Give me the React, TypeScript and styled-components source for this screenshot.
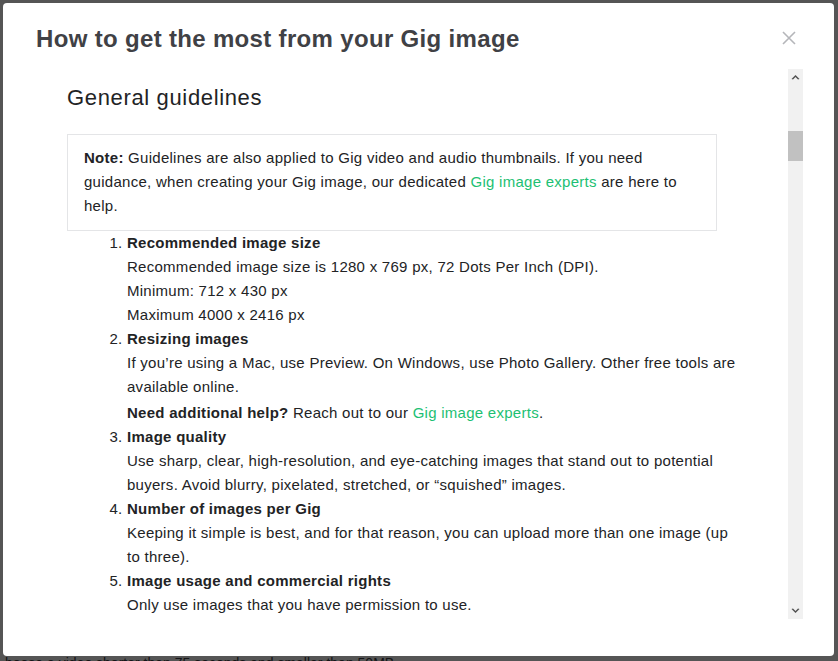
import React from "react";
import styled, { createGlobalStyle } from "styled-components";

const GlobalStyle = createGlobalStyle`
  html, body { margin: 0; padding: 0; }
  body {
    font-family: "Liberation Sans", Arial, sans-serif;
    background: #ffffff;
    overflow: hidden;
  }
  * { box-sizing: border-box; }
`;

const BackPage = styled.div`
  height: 661px;
  padding: 653px 0 0 5px;
  font-size: 14px;
  line-height: 20px;
  color: #404145;
  overflow: hidden;
`;

const Overlay = styled.div`
  position: fixed;
  inset: 0;
  background: rgba(0, 0, 0, 0.667);
`;

const Modal = styled.div`
  position: fixed;
  left: 3px;
  top: 3px;
  width: 831px;
  height: 653px;
  background: #ffffff;
  border-radius: 4px;
  display: flex;
  flex-direction: column;
  color: #222325;
`;

const Header = styled.div`
  display: flex;
  justify-content: space-between;
  align-items: flex-start;
  padding: 20px 38px 14px 33px;
`;

const Title = styled.h1`
  margin: 0;
  font-size: 24px;
  line-height: 32px;
  font-weight: 700;
  letter-spacing: 0.33px;
  color: #404145;
`;

const CloseButton = styled.button`
  margin-top: 8px;
  width: 14px;
  height: 14px;
  padding: 0;
  border: none;
  background: none;
  display: flex;
  cursor: pointer;
`;

const Body = styled.div`
  flex: 1;
  display: flex;
  min-height: 0;
  padding: 0 31px 37px 0;
`;

const Content = styled.div`
  flex: 1;
  overflow: hidden;
  padding: 15px 46px 0 64px;
  font-size: 15px;
  line-height: 24px;
  letter-spacing: 0.27px;
`;

const SectionTitle = styled.h2`
  margin: 0 0 22px;
  font-size: 22px;
  line-height: 28px;
  font-weight: 400;
  letter-spacing: 0.65px;
  color: #222325;
`;

const NoteBox = styled.div`
  width: 650px;
  border: 1px solid #e4e5e7;
  padding: 11px 16px 12px;
`;

const Strong = styled.b`
  font-weight: 700;
`;

const Link = styled.a`
  color: #1dbf73;
  text-decoration: none;
`;

const List = styled.ol`
  margin: 0;
  padding-left: 60px;
`;

const Item = styled.li`
  margin: 0;
`;

const ItemTitle = styled.div`
  font-weight: 700;
`;

const Para = styled.p<{ $gap?: number }>`
  margin: ${(p) => p.$gap ?? 0}px 0 0;
`;

const Scrollbar = styled.div`
  width: 15px;
  background: #f1f1f1;
  display: flex;
  flex-direction: column;
  align-items: center;
`;

const ArrowButton = styled.div`
  width: 15px;
  height: 16px;
  display: flex;
  align-items: center;
  justify-content: center;
  flex-shrink: 0;
`;

const Track = styled.div`
  flex: 1;
  width: 15px;
`;

const Thumb = styled.div<{ $offset: number; $size: number }>`
  margin-top: ${(p) => p.$offset}px;
  height: ${(p) => p.$size}px;
  width: 15px;
  background: #c1c1c1;
`;

const ArrowUp = () => (
  <svg width="9" height="6" viewBox="0 0 9 6">
    <path d="M0.5 5 L4.5 1 L8.5 5 L7 5.5 L4.5 3 L2 5.5 Z" fill="#505050" />
  </svg>
);

const ArrowDown = () => (
  <svg width="9" height="6" viewBox="0 0 9 6">
    <path d="M0.5 1 L4.5 5 L8.5 1 L7 0.5 L4.5 3 L2 0.5 Z" fill="#505050" />
  </svg>
);

export default function App() {
  return (
    <>
      <GlobalStyle />
      <BackPage>hoose a video shorter than 75 seconds and smaller than 50MB</BackPage>
      <Overlay />
      <Modal>
        <Header>
          <Title>How to get the most from your Gig image</Title>
          <CloseButton aria-label="Close">
            <svg width="14" height="14" viewBox="0 0 14 14">
              <path d="M1 1 L13 13 M13 1 L1 13" stroke="#b5b6ba" strokeWidth="1.6" />
            </svg>
          </CloseButton>
        </Header>
        <Body>
          <Content>
            <SectionTitle>General guidelines</SectionTitle>
            <NoteBox>
              <Strong>Note:</Strong> Guidelines are also applied to Gig video and audio thumbnails. If you need
              guidance, when creating your Gig image, our dedicated <Link href="#">Gig image experts</Link> are
              here to help.
            </NoteBox>
            <List>
              <Item>
                <ItemTitle>Recommended image size</ItemTitle>
                <Para>Recommended image size is 1280 x 769 px, 72 Dots Per Inch (DPI).</Para>
                <Para>Minimum: 712 x 430 px</Para>
                <Para>Maximum 4000 x 2416 px</Para>
              </Item>
              <Item>
                <ItemTitle>Resizing images</ItemTitle>
                <Para>
                  If you’re using a Mac, use Preview. On Windows, use Photo Gallery. Other free tools are
                  available online.
                </Para>
                <Para $gap={2}>
                  <Strong>Need additional help?</Strong> Reach out to our{" "}
                  <Link href="#">Gig image experts</Link>.
                </Para>
              </Item>
              <Item>
                <ItemTitle>Image quality</ItemTitle>
                <Para>
                  Use sharp, clear, high-resolution, and eye-catching images that stand out to potential
                  buyers. Avoid blurry, pixelated, stretched, or “squished” images.
                </Para>
              </Item>
              <Item>
                <ItemTitle>Number of images per Gig</ItemTitle>
                <Para>
                  Keeping it simple is best, and for that reason, you can upload more than one image (up to
                  three).
                </Para>
              </Item>
              <Item>
                <ItemTitle>Image usage and commercial rights</ItemTitle>
                <Para>Only use images that you have permission to use.</Para>
              </Item>
            </List>
          </Content>
          <Scrollbar>
            <ArrowButton>
              <ArrowUp />
            </ArrowButton>
            <Track>
              <Thumb $offset={46} $size={30} />
            </Track>
            <ArrowButton>
              <ArrowDown />
            </ArrowButton>
          </Scrollbar>
        </Body>
      </Modal>
    </>
  );
}
